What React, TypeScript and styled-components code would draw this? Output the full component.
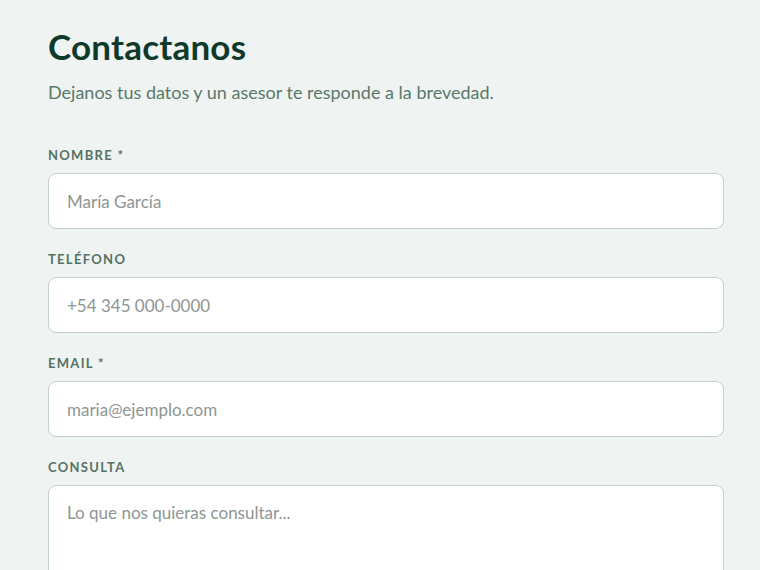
import React from "react";
import styled, { createGlobalStyle } from "styled-components";

const Global = createGlobalStyle`
  html, body {
    margin: 0;
    padding: 0;
    background: #eff4f2;
  }
  body {
    font-family: Lato, "Open Sans", sans-serif;
    -webkit-font-smoothing: antialiased;
  }
  * { box-sizing: border-box; }
`;

const Page = styled.div`
  min-height: 570px;
  padding: 26px 36px 0 48px;
`;

const Title = styled.h1`
  margin: 0;
  font-size: 35px;
  line-height: 40px;
  font-weight: 700;
  color: #0f3a2b;
  letter-spacing: 0.2px;
`;

const Subtitle = styled.p`
  margin: 14px 0 0;
  font-size: 18px;
  line-height: 24px;
  font-weight: 400;
  color: #5a786a;
`;

const Form = styled.form`
  margin-top: 42px;
  display: flex;
  flex-direction: column;
  gap: 21px;
`;

const Field = styled.div`
  display: flex;
  flex-direction: column;
  gap: 9px;
`;

const Label = styled.label`
  font-size: 13px;
  line-height: 18px;
  font-weight: 700;
  letter-spacing: 1.3px;
  text-transform: uppercase;
  color: #557262;
`;

const fieldStyles = `
  width: 100%;
  border: 1px solid #c2d1ca;
  border-radius: 8px;
  background: #ffffff;
  font-family: Lato, "Open Sans", sans-serif;
  font-size: 17px;
  color: #1f2f28;
  padding: 0 18px;
  outline: none;
  &::placeholder { color: #8d9692; }
`;

const Input = styled.input`
  ${fieldStyles}
  height: 56px;
`;

const TextArea = styled.textarea`
  ${fieldStyles}
  height: 140px;
  padding-top: 15px;
  resize: none;
  line-height: 24px;
`;

const fields = [
  { id: "nombre", label: "Nombre *", placeholder: "María García" },
  { id: "telefono", label: "Teléfono", placeholder: "+54 345 000-0000" },
  { id: "email", label: "Email *", placeholder: "maria@ejemplo.com" },
];

export default function App() {
  return (
    <Page>
      <Global />
      <Title>Contactanos</Title>
      <Subtitle>Dejanos tus datos y un asesor te responde a la brevedad.</Subtitle>
      <Form onSubmit={(e) => e.preventDefault()}>
        {fields.map((f) => (
          <Field key={f.id}>
            <Label htmlFor={f.id}>{f.label}</Label>
            <Input id={f.id} placeholder={f.placeholder} />
          </Field>
        ))}
        <Field>
          <Label htmlFor="consulta">Consulta</Label>
          <TextArea id="consulta" placeholder="Lo que nos quieras consultar..." />
        </Field>
      </Form>
    </Page>
  );
}
